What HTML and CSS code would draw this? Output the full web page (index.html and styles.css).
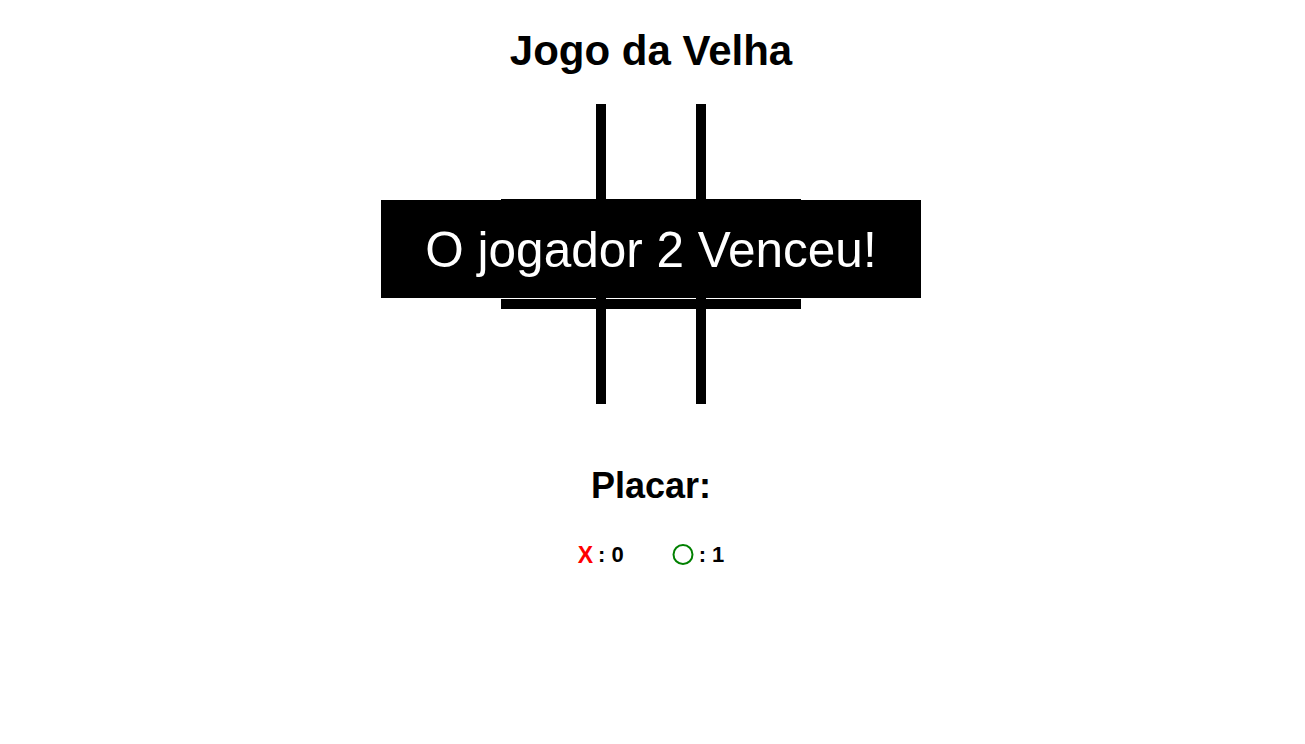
FILE: index.html
```html
<!DOCTYPE html>
<html lang="pt-BR">
<head>
<meta charset="utf-8">
<title>Jogo da Velha</title>
<link rel="stylesheet" href="styles.css">
</head>
<body>
<div class="app">
  <h1 class="title">Jogo da Velha</h1>
  <div class="board">
    <div class="cell c-r c-b"></div>
    <div class="cell c-l c-r c-b"></div>
    <div class="cell c-l c-b"></div>
    <div class="cell c-r c-t c-b"></div>
    <div class="cell c-l c-r c-t c-b"></div>
    <div class="cell c-l c-t c-b"></div>
    <div class="cell c-r c-t"></div>
    <div class="cell c-l c-r c-t"></div>
    <div class="cell c-l c-t"></div>
    <div class="overlay">O jogador 2 Venceu!</div>
  </div>
  <h2 class="score-title">Placar:</h2>
  <div class="score">
    <div class="score-item"><span class="x">X</span><span class="val">: 0</span></div>
    <div class="score-item"><svg class="o" width="22" height="22" viewBox="0 0 22 22"><circle cx="11" cy="10.5" r="9.5" fill="none" stroke="#008000" stroke-width="2"/></svg><span class="val">: 1</span></div>
  </div>
</div>
</body>
</html>
```
FILE: styles.css
```css
html, body {
  margin: 0;
  padding: 0;
  background: #fff;
}
body {
  font-family: "Liberation Sans", Arial, sans-serif;
  color: #000;
}
.app {
  display: flex;
  flex-direction: column;
  align-items: center;
  padding-top: 28px;
  padding-right: 3px;
}
.title {
  margin: 0;
  font-size: 42px;
  line-height: 46px;
  font-weight: bold;
}
.board {
  position: relative;
  margin-top: 30px;
  display: grid;
  grid-template-columns: repeat(3, 100px);
  grid-template-rows: repeat(3, 100px);
}
.cell {
  box-sizing: border-box;
  border: 0 solid #000;
}
.c-l { border-left-width: 5px; }
.c-r { border-right-width: 5px; }
.c-t { border-top-width: 5px; }
.c-b { border-bottom-width: 5px; }
.overlay {
  position: absolute;
  top: 96px;
  left: -120px;
  width: 540px;
  height: 98px;
  background: #000;
  color: #fff;
  font-size: 49.5px;
  display: flex;
  align-items: center;
  justify-content: center;
}
.score-title {
  margin: 62px 0 0;
  font-size: 36px;
  line-height: 40px;
  font-weight: bold;
}
.score {
  margin-top: 36px;
  display: flex;
  align-items: center;
  gap: 48px;
  font-size: 22px;
  line-height: 26px;
  font-weight: bold;
}
.score-item {
  display: flex;
  align-items: center;
}
.x {
  color: #ff0000;
  font-size: 23px;
}
.val {
  font-size: 22px;
  margin-left: 5px;
}
.o {
  display: block;
}
```
